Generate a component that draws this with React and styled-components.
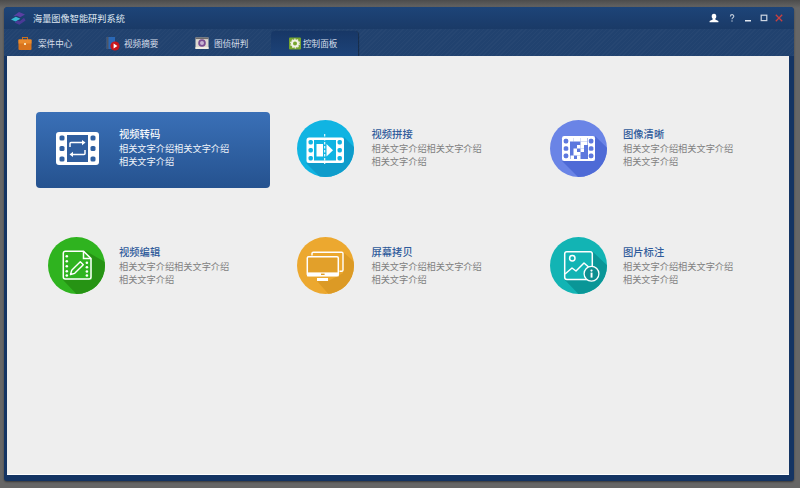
import React from "react";
import styled, { createGlobalStyle } from "styled-components";

const Global = createGlobalStyle`
  html, body { margin: 0; padding: 0; height: 100%; }
  body { background: linear-gradient(180deg, #4c4c4c 0, #666 8px, #666 100%); font-family: "Noto Sans CJK SC", "Liberation Sans", sans-serif; overflow: hidden; }
  #root { height: 488px; }
`;

const Page = styled.div`
  height: 488px;
  box-sizing: border-box;
  padding: 7px 6px 7px 4px;
  display: flex;
`;
const Win = styled.div`
  flex: 1;
  display: flex;
  flex-direction: column;
  background: #143463;
  border-radius: 4px 4px 3px 3px;
  overflow: hidden;
  box-shadow: 0 1px 2px rgba(0,0,0,.45);
`;
const TitleBar = styled.div`
  height: 22px;
  display: flex;
  align-items: center;
  padding: 0 10px 0 6px;
  background: linear-gradient(180deg, #1d4478 0, #1a3a67 100%);
`;
const Logo = styled.svg`
  width: 17px;
  height: 15px;
  margin-right: 6px;
`;
const AppName = styled.div`
  flex: 1;
  font-size: 9.2px;
  line-height: 14px;
  color: #dfe6f0;
`;
const WinBtns = styled.div`
  display: flex;
  align-items: center;
`;
const WinBtn = styled.svg`
  width: 10px;
  height: 10px;
  margin-left: ${p => p.$ml}px;
`;
const TabBar = styled.div`
  height: 27px;
  display: flex;
  background-color: #21426f;
  background-image: repeating-linear-gradient(135deg, rgba(255,255,255,.025) 0 1px, transparent 1px 3px);
`;
const Tab = styled.div`
  width: ${p => (p.$active ? 87 : 89)}px;
  box-sizing: border-box;
  margin-top: 2px;
  height: 25px;
  display: flex;
  align-items: center;
  padding: 0 0 1px ${p => p.$pad}px;
  gap: ${p => p.$gap}px;
  font-size: 8.6px;
  color: #d7dfeb;
  border-radius: 4px 4px 0 0;
  background: ${p => (p.$active ? "linear-gradient(180deg, #173766 0, #1d4379 100%)" : "transparent")};
  box-shadow: ${p => (p.$active ? "1px 0 1px rgba(0,0,0,.35)" : "none")};
`;
const TabIcon = styled.svg`
  width: 14px;
  height: 15px;
  flex: none;
`;
const Content = styled.div`
  flex: 1;
  margin: 0 5px 6px 3px;
  background: #eeeeee;
  border-bottom: 1px solid #fff;
  display: grid;
  grid-template-columns: 249px 253px 1fr;
  grid-template-rows: 76px 76px;
  row-gap: 41px;
  padding: 56px 0 0 29px;
  box-sizing: border-box;
  align-content: start;
`;
const Item = styled.div`
  width: 234px;
  height: 76px;
  box-sizing: border-box;
  display: flex;
  align-items: flex-start;
  gap: ${p => p.$gap}px;
  padding: ${p => (p.$active ? "20px 0 0 20px" : "8px 0 0 12px")};
  border-radius: 4px;
  background: ${p => (p.$active ? "linear-gradient(180deg, #3a70b7 0, #25528f 100%)" : "transparent")};
`;
const Badge = styled.svg`
  width: 57px;
  height: 57px;
  flex: none;
`;
const CardIcon = styled.svg`
  width: 43px;
  height: 33px;
  flex: none;
`;
const Texts = styled.div`
  margin-top: ${p => p.$top}px;
  display: flex;
  flex-direction: column;
`;
const ItemTitle = styled.div`
  font-size: 10.3px;
  line-height: 14px;
  margin-bottom: 1px;
  font-weight: 500;
  color: ${p => (p.$active ? "#f4f7fb" : "#2f5b9b")};
`;
const Desc = styled.div`
  font-size: 9.2px;
  line-height: 13px;
  color: ${p => (p.$active ? "#f0f4fa" : "#7f7f7f")};
  white-space: nowrap;
`;

function Round({ id, color, shade, shadow, children }) {
  return (
    <Badge viewBox="0 0 57 57">
      <defs>
        <clipPath id={id}><circle cx="28.5" cy="28.5" r="28.5" /></clipPath>
      </defs>
      <circle cx="28.5" cy="28.5" r="28.5" fill={color} />
      <polygon points={shadow} fill={shade} clipPath={`url(#${id})`} />
      {children}
    </Badge>
  );
}

function Holes({ xs, ys, fill, w = 4.4, h = 4.4 }) {
  return xs.flatMap(x =>
    ys.map(y => <rect key={x + "-" + y} x={x} y={y} width={w} height={h} rx="1.6" fill={fill} />)
  );
}

const Blue = () => (
  <Round id="a" color="#10b4e2" shade="#0e9ccb" shadow="47,17 47,43 9,43 35,69 80,69 80,50">
    <rect x="9.5" y="17.5" width="37.5" height="25.5" rx="2.5" fill="#fff" />
    <Holes xs={[11.5, 40.5]} ys={[20, 28, 36]} fill="#10b4e2" />
    <rect x="17" y="20" width="22" height="20.5" fill="#10b4e2" />
    <polygon points="19.5,24 26,24 26,36.5 19.5,36.5" fill="#fff" />
    <polygon points="29.5,24 29.5,36.5 36,30.2" fill="#fff" />
    <path d="M27.7 14v30" stroke="#fff" strokeWidth="1.1" strokeDasharray="2.4 1.6" />
  </Round>
);

const mosaic = [
  [20, 18], [23.5, 18], [27, 18], [30.5, 18], [34, 18],
  [30.5, 21.5], [34, 21.5],
  [27, 25], [30.5, 25],
  [23.5, 28.5], [30.5, 28.5],
  [27, 32], [23.5, 32],
  [27, 35.5], [20.5, 35.5],
];
const Violet = () => (
  <Round id="b" color="#6a84e6" shade="#4e6ad6" shadow="45,16 45,41 12,41 40,69 80,69 80,50">
    <rect x="12" y="16" width="33" height="25" rx="2.2" fill="#fff" />
    <Holes xs={[13.7, 38.8]} ys={[18.8, 26.2, 33.6]} fill="#5d78de" w="4.6" h="4.6" />
    <rect x="20" y="18" width="18" height="21" fill="#5d78de" />
    {mosaic.map(([x, y]) => <rect key={x + "_" + y} x={x} y={y} width="3.5" height="3.5" fill="#fff" />)}
  </Round>
);

const Green = () => (
  <Round id="c" color="#2fb31f" shade="#269314" shadow="36,13 44,21 44,43 15,43 40,69 80,69 80,38">
    <path d="M15.3 16.2a2 2 0 0 1 2-2H35.5L43 21.5V40a2 2 0 0 1-2 2H17.3a2 2 0 0 1-2-2Z" fill="none" stroke="#fff" strokeWidth="1.5" />
    <path d="M35.5 14v7.5H43" fill="none" stroke="#fff" strokeWidth="1.5" />
    <Holes xs={[17.5]} ys={[18, 23, 28, 33, 37.2]} fill="#fff" w="2.6" h="2.6" />
    <Holes xs={[37.6]} ys={[24.5, 29, 33.2, 37.2]} fill="#fff" w="2.6" h="2.6" />
    <path d="M22.5 37.5l1.2-4.2L32.3 24.7l3 3L26.7 36.3Z" fill="none" stroke="#fff" strokeWidth="1.4" strokeLinejoin="round" />
  </Round>
);

const Orange = () => (
  <Round id="d" color="#eca82f" shade="#dc9a25" shadow="46,15 46,36 41,39 31,44 20,44 42,69 80,69 80,45">
    <path d="M15 18.5V16.5a1.3 1.3 0 0 1 1.3-1.3H44.7A1.3 1.3 0 0 1 46 16.5V33a1.3 1.3 0 0 1-1.3 1.3H42.5" fill="none" stroke="#fff" strokeWidth="1.4" />
    <rect x="10.3" y="19.8" width="31" height="18.8" rx="1.3" fill="#e2a02a" stroke="#fff" strokeWidth="1.5" />
    <rect x="10" y="35.4" width="31.6" height="4" fill="#fff" />
    <rect x="24" y="36.6" width="3.6" height="1.4" fill="#de9d27" />
    <rect x="20" y="41" width="11" height="3" fill="#fff" />
  </Round>
);

const Teal = () => (
  <Round id="e" color="#12b4b4" shade="#0a9697" shadow="42,14 42,30 48,37 42,44 14,42 40,69 80,69 80,50">
    <rect x="14.7" y="14.8" width="27.6" height="27.6" rx="2.2" fill="none" stroke="#fff" strokeWidth="1.5" />
    <circle cx="22.3" cy="21.3" r="2.7" fill="none" stroke="#fff" strokeWidth="1.5" />
    <path d="M15 37l7-6 4 3 8-8 8 7" fill="none" stroke="#fff" strokeWidth="1.5" strokeLinejoin="round" />
    <circle cx="41.5" cy="36.7" r="7.4" fill="#0e8f90" stroke="#fff" strokeWidth="1.3" />
    <circle cx="41.5" cy="33.6" r="1.1" fill="#fff" />
    <rect x="40.6" y="35.6" width="1.9" height="5" fill="#fff" />
  </Round>
);

const Film = () => (
  <CardIcon viewBox="0 0 43 33">
    <rect x="0" y="0" width="43" height="33" rx="3" fill="#fff" />
    <Holes xs={[3.5, 34.5]} ys={[3.5, 14, 24.5]} fill="#2f60a2" w="5" h="5" />
    <rect x="11" y="3" width="21" height="27" fill="#2f5e9f" />
    <path d="M14 15v-3.4a1 1 0 0 1 1-1h11.5" fill="none" stroke="#fff" strokeWidth="1.5" />
    <polygon points="26,8 26,13.2 29.5,10.6" fill="#fff" />
    <path d="M29 18v3.4a1 1 0 0 1-1 1H16.5" fill="none" stroke="#fff" strokeWidth="1.5" />
    <polygon points="17,19.8 17,25 13.5,22.4" fill="#fff" />
  </CardIcon>
);

const Line2 = "相关文字介绍相关文字介绍";
const Line3 = "相关文字介绍";

function Copy({ title, active, top }) {
  return (
    <Texts $top={top}>
      <ItemTitle $active={active}>{title}</ItemTitle>
      <Desc $active={active}>{Line2}</Desc>
      <Desc $active={active}>{Line3}</Desc>
    </Texts>
  );
}

export default function App() {
  return (
    <Page>
      <Global />
      <Win>
        <TitleBar>
          <Logo viewBox="0 0 17 15">
            <path d="M3.2 5.2 9 1 15 3.6 10.2 6.2 7 4.8Z" fill="#5b3fa3" />
            <path d="M1 8.6 5.8 5.8 10.4 7.8 5.6 10.6Z" fill="#38b7d2" />
            <path d="M4.6 11.6 9.4 13.8 15.6 9.6 14 6.8 9.8 10.2 7.4 9.6Z" fill="#4a3a96" />
          </Logo>
          <AppName>海量图像智能研判系统</AppName>
          <WinBtns>
            <WinBtn $ml={0} viewBox="0 0 10 10">
              <path d="M5 .8c1.6 0 2.4 1.2 2.3 2.7 0 1-.5 1.8-1 2.3v.8L9.4 8v1.3H.6V8l3.1-1.4v-.8c-.5-.5-1-1.3-1-2.3C2.6 2 3.4.8 5 .8Z" fill="#fff" />
            </WinBtn>
            <WinBtn $ml={8} viewBox="0 0 10 10">
              <path d="M3.4 3.4C3.4 1 6.8 1.2 6.8 3.2c0 1.4-1.8 1.4-1.8 3" fill="none" stroke="#c5cfdd" strokeWidth="1.1" />
              <rect x="4.4" y="7.4" width="1.2" height="1.2" fill="#c5cfdd" />
            </WinBtn>
            <WinBtn $ml={6} viewBox="0 0 10 10">
              <rect x="2" y="7" width="6" height="1.5" fill="#dfe6ef" />
            </WinBtn>
            <WinBtn $ml={6} viewBox="0 0 10 10">
              <rect x="2.2" y="2.2" width="5.6" height="5.4" fill="none" stroke="#cdd6e2" strokeWidth="1.2" />
            </WinBtn>
            <WinBtn $ml={5} viewBox="0 0 10 10">
              <path d="M1.8 1.8 8.2 8.2M8.2 1.8 1.8 8.2" stroke="#c9403f" strokeWidth="1.3" />
            </WinBtn>
          </WinBtns>
        </TitleBar>
        <TabBar>
          <Tab $pad={14} $gap={6}>
            <TabIcon viewBox="0 0 14 15">
              <rect x="4.5" y="1.5" width="5" height="3" fill="none" stroke="#c96f1c" strokeWidth="1" />
              <rect x="0.5" y="3.5" width="13" height="10.5" rx="1" fill="#d9741d" />
              <rect x="0.5" y="3.5" width="13" height="4" fill="#ea8a2c" />
              <rect x="6" y="7" width="2" height="2" fill="#f7e2b8" />
            </TabIcon>
            案件中心
          </Tab>
          <Tab $pad={13} $gap={4}>
            <TabIcon viewBox="0 0 14 15">
              <rect x="0.5" y="1" width="8.5" height="12" fill="#2a68b6" />
              <rect x="0.5" y="1" width="2" height="12" fill="#4b5566" />
              <circle cx="9" cy="10" r="4.6" fill="#c8161d" />
              <polygon points="7.6,7.6 7.6,12.4 11.4,10" fill="#fff" />
            </TabIcon>
            视频摘要
          </Tab>
          <Tab $pad={13} $gap={5}>
            <TabIcon viewBox="0 0 14 15">
              <rect x="0.5" y="1.5" width="13" height="11.5" fill="#ddd8cf" />
              <rect x="0.5" y="1.5" width="13" height="1.6" fill="#6d6a6a" />
              <circle cx="7" cy="7" r="3.8" fill="#7a4d92" />
              <circle cx="7" cy="7" r="2" fill="#c7b3d3" />
              <rect x="0.5" y="11" width="13" height="2" fill="#f1ede4" />
            </TabIcon>
            图侦研判
          </Tab>
          <Tab $active $pad={18} $gap={0}>
            <TabIcon viewBox="0 0 14 15">
              <rect x="0" y="1.5" width="12" height="12" rx="1" fill="#77a52f" />
              <circle cx="6" cy="7.5" r="3" fill="none" stroke="#f0f1e6" strokeWidth="2" />
              <circle cx="6" cy="7.5" r="4.3" fill="none" stroke="#f0f1e6" strokeWidth="1.2" strokeDasharray="1.5 1.2" />
            </TabIcon>
            控制面板
          </Tab>
        </TabBar>
        <Content>
          <Item $active $gap={20}>
            <Film />
            <Copy title="视频转码" active top={-5} />
          </Item>
          <Item $gap={17.5}>
            <Blue />
            <Copy title="视频拼接" top={7} />
          </Item>
          <Item $gap={16}>
            <Violet />
            <Copy title="图像清晰" top={7} />
          </Item>
          <Item $gap={14}>
            <Green />
            <Copy title="视频编辑" top={8} />
          </Item>
          <Item $gap={17.5}>
            <Orange />
            <Copy title="屏幕拷贝" top={8} />
          </Item>
          <Item $gap={16}>
            <Teal />
            <Copy title="图片标注" top={8} />
          </Item>
        </Content>
      </Win>
    </Page>
  );
}
